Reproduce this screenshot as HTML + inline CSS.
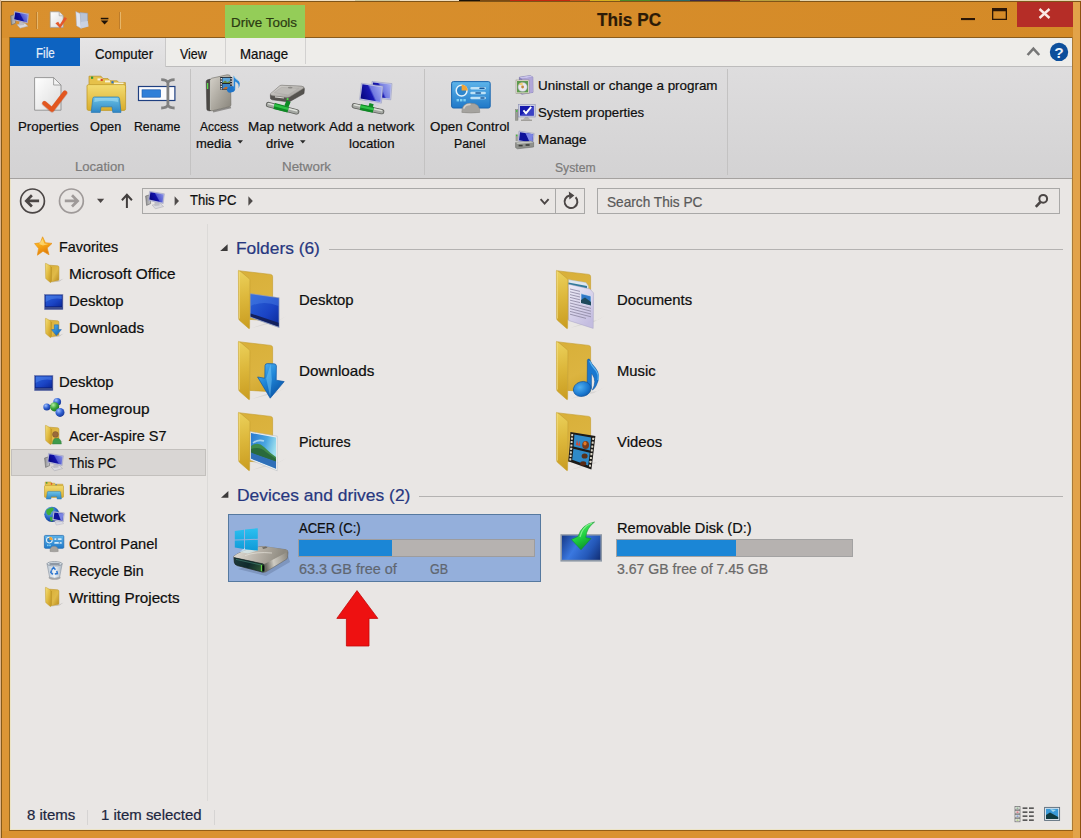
<!DOCTYPE html>
<html lang="en">
<head>
<meta charset="utf-8">
<title>This PC</title>
<style>
html,body{margin:0;padding:0}
body{width:1081px;height:838px;position:relative;overflow:hidden;background:#f3e3c3;font-family:"Liberation Sans","DejaVu Sans",sans-serif}
.a{position:absolute}
.t{position:absolute;white-space:nowrap;line-height:1;transform-origin:0 0;display:block;-webkit-text-stroke:0.22px currentColor}
svg{position:absolute;overflow:visible}
#win{left:1px;top:1px;width:1080px;height:837px;background:linear-gradient(90deg,#d9902e,#d48a27)}
#tabrow{left:10px;top:38px;width:1062px;height:28px;background:#eeedea}
#ribbon{left:10px;top:66px;width:1062px;height:113px;background:linear-gradient(#dedddE 0,#d9d8d9 45%,#d3d2d3 100%)}
#content{left:10px;top:179px;width:1062px;height:651px;background:#e9e6e4}
.vsep{position:absolute;width:1px;background:#c3c2c2}
.box{position:absolute;border:1px solid #a9a8a7;box-sizing:border-box}
</style>
</head>
<body>
<div id="win" class="a"></div>
<div id="tabrow" class="a"></div>
<div id="ribbon" class="a"></div>
<div id="content" class="a"></div>
<!-- window frame lines -->
<div class="a" style="left:2px;top:38px;width:8px;height:800px;background:#dc9636"></div>
<div class="a" style="left:1073px;top:2px;width:8px;height:836px;background:#e2a349"></div>
<div class="a" style="left:2px;top:831px;width:1071px;height:7px;background:#da9230"></div>
<div class="a" style="left:0;top:0;width:1081px;height:1px;background:linear-gradient(90deg,#f1dfc1 0,#f1dfc1 32.8%,#cfc79c 32.8%,#cfc79c 37%,#f1dfc1 37%,#f1dfc1 42.5%,#1a1208 42.5%,#1a1208 44.4%,#7a4a12 44.4%,#7a4a12 47.2%,#c4280f 47.2%,#c4280f 52.7%,#c8541a 52.7%,#c8541a 54.6%,#d8b020 54.6%,#d8b020 57.4%,#4a8a2a 57.4%,#4a8a2a 60.1%,#2a6a6a 60.1%,#2a6a6a 63.8%,#3a2a4a 63.8%,#3a2a4a 66.6%,#7a2018 66.6%,#7a2018 68.5%,#b8a040 68.5%,#b8a040 74%,#e6d6b0 74%,#e6d6b0 100%)"></div>
<div class="a" style="left:0;top:0;width:1px;height:838px;background:#dcb48c"></div>
<div class="a" style="left:1px;top:1px;width:1080px;height:1px;background:#7f5418"></div>
<div class="a" style="left:1px;top:1px;width:1px;height:837px;background:#855a1a"></div>
<div class="a" style="left:1080px;top:1px;width:1px;height:837px;background:#8e5210"></div>
<div class="a" style="left:9px;top:37px;width:1064px;height:1px;background:#8a5c1c"></div>
<div class="a" style="left:9px;top:37px;width:1px;height:794px;background:#946820"></div>
<div class="a" style="left:1072px;top:37px;width:1px;height:794px;background:#a87a38"></div>
<div class="a" style="left:9px;top:830px;width:1064px;height:1px;background:#945e18"></div>
<div class="a" style="left:10px;top:179px;width:1px;height:651px;background:#ece4c6"></div>
<div class="a" style="left:1071px;top:179px;width:1px;height:651px;background:#ece4c6"></div>
<div class="a" style="left:10px;top:829px;width:1062px;height:1px;background:#ece4c6"></div>
<!-- title bar -->
<div class="a" style="left:225px;top:5px;width:80px;height:33px;background:#94cd58"></div>
<div class="a" style="left:1017px;top:2px;width:56px;height:25px;background:#b52d27"></div>
<div class="a" style="left:37px;top:12px;width:1px;height:17px;background:#e6b669"></div><div class="a" style="left:36px;top:12px;width:1px;height:17px;background:#bd7c2a"></div>
<div class="a" style="left:120px;top:12px;width:1px;height:17px;background:#e6b669"></div><div class="a" style="left:119px;top:12px;width:1px;height:17px;background:#bd7c2a"></div>
<!-- tabs -->
<div class="a" style="left:10px;top:38px;width:70px;height:28px;background:#0d63c1"></div>
<div class="a" style="left:80px;top:38px;width:86px;height:29px;background:linear-gradient(#e6e5e6,#dedddE);border-right:1px solid #c9c8c8;box-sizing:border-box"></div>
<div class="vsep" style="left:225px;top:38px;height:26px;background:#d2d1d0"></div>
<div class="vsep" style="left:305px;top:38px;height:26px;background:#d2d1d0"></div>
<div class="a" style="left:166px;top:66px;width:906px;height:1px;background:#bdbcbc"></div>
<div class="a" style="left:10px;top:178px;width:1062px;height:1px;background:#a5a2a0"></div>
<!-- ribbon separators -->
<div class="vsep" style="left:190px;top:69px;height:106px"></div>
<div class="vsep" style="left:424px;top:69px;height:106px"></div>
<div class="vsep" style="left:727px;top:69px;height:106px"></div>
<!-- address bar -->
<div class="box" style="left:142px;top:188px;width:443px;height:26px"></div>
<div class="vsep" style="left:555px;top:189px;height:24px;background:#a9a8a7"></div>
<div class="box" style="left:597px;top:188px;width:463px;height:26px"></div>
<!-- sidebar -->
<div class="vsep" style="left:207px;top:224px;height:577px;background:#dcdad8"></div>
<div class="a" style="left:11px;top:449px;width:195px;height:27px;background:#d9d6d4;border:1px solid #c3c0bd;box-sizing:border-box"></div>
<!-- group lines -->
<div class="a" style="left:329px;top:249px;width:734px;height:1px;background:#b4b2b1"></div>
<div class="a" style="left:419px;top:496px;width:644px;height:1px;background:#b4b2b1"></div>
<!-- selection -->
<div class="a" style="left:228px;top:514px;width:313px;height:68px;background:#94afdb;border:1px solid #56799f;box-sizing:border-box"></div>
<!-- capacity bars -->
<div class="a" style="left:298px;top:539px;width:237px;height:18px;background:#b6b2b0;border:1px solid #9d9c9e;box-sizing:border-box"><div style="width:93px;height:100%;background:#1b86d6"></div></div>
<div class="a" style="left:616px;top:539px;width:237px;height:18px;background:#b6b2b0;border:1px solid #a3a2a2;box-sizing:border-box"><div style="width:119px;height:100%;background:#1b86d6"></div></div>
<!-- status bar separators -->
<div class="vsep" style="left:87px;top:810px;height:15px;background:#d6d4d3"></div>
<div class="vsep" style="left:214px;top:810px;height:15px;background:#d6d4d3"></div>
<svg width="0" height="0" style="left:0;top:0"><defs>
<linearGradient id="scr" gradientUnits="userSpaceOnUse" x1="5.5" y1="10.5" x2="19" y2="3"><stop offset="0" stop-color="#05057c"/><stop offset=".48" stop-color="#1212aa"/><stop offset=".55" stop-color="#4f57cf"/><stop offset="1" stop-color="#8d95e8"/></linearGradient>
<linearGradient id="twr" x1="0" y1="0" x2="1" y2="0"><stop offset="0" stop-color="#8e8e8e"/><stop offset="1" stop-color="#c9c9cc"/></linearGradient>
<linearGradient id="fFront" x1="0" y1="0" x2="1" y2="1"><stop offset="0" stop-color="#f0d36d"/><stop offset=".5" stop-color="#e3bd48"/><stop offset="1" stop-color="#c89c22"/></linearGradient>
<linearGradient id="fBack" x1="0" y1="0" x2="0" y2="1"><stop offset="0" stop-color="#e6c253"/><stop offset="1" stop-color="#d3a930"/></linearGradient>
<linearGradient id="dsk" x1="0" y1="0" x2="1" y2="1"><stop offset="0" stop-color="#2a63d8"/><stop offset=".6" stop-color="#1a43c4"/><stop offset="1" stop-color="#0c2a9a"/></linearGradient>
<linearGradient id="blueArr" x1="0" y1="0" x2="1" y2="1"><stop offset="0" stop-color="#4db1ee"/><stop offset="1" stop-color="#0d5fb5"/></linearGradient>
<linearGradient id="paper" x1="0" y1="0" x2="1" y2="1"><stop offset="0" stop-color="#ffffff"/><stop offset="1" stop-color="#dcdcdc"/></linearGradient>
<linearGradient id="metal" x1="0" y1="0" x2="0" y2="1"><stop offset="0" stop-color="#c8c8c6"/><stop offset=".5" stop-color="#8d8d8a"/><stop offset="1" stop-color="#4a4a48"/></linearGradient>
<linearGradient id="grn" x1="0" y1="0" x2="0" y2="1"><stop offset="0" stop-color="#5fe06a"/><stop offset="1" stop-color="#129a2a"/></linearGradient>
<linearGradient id="sky" x1="0" y1="0" x2="0" y2="1"><stop offset="0" stop-color="#3f8fd6"/><stop offset=".55" stop-color="#a9d6ee"/><stop offset=".6" stop-color="#4f8f6a"/><stop offset="1" stop-color="#1f4f5a"/></linearGradient>
<linearGradient id="cp" x1="0" y1="0" x2="0" y2="1"><stop offset="0" stop-color="#5db4ea"/><stop offset="1" stop-color="#1f78c8"/></linearGradient>
</defs></svg>
<svg style="left:10px;top:10.5px" width="19.4" height="17.46" viewBox="0 0 20 18"><path d="M0.6 5 L5 3.8 L5.6 12.6 L1.6 14.4Z" fill="url(#twr)" stroke="#66666a" stroke-width=".6"/>
<path d="M7.2 14 L15.4 12.6 L18.6 15.6 L10.4 17.8Z" fill="#d9d9de" stroke="#a6a6ae" stroke-width=".5"/>
<path d="M9.6 11 L14 11.6 L14.6 14.4 L9.4 15Z" fill="#bdbdc6"/>
<path d="M4.6 0.3 L19.4 2.8 L18.2 12.6 L3.4 9.4Z" fill="#b9bcdc" stroke="#8e91b6" stroke-width=".4"/>
<path d="M5.4 1.3 L18.5 3.5 L17.5 11.5 L4.3 8.6Z" fill="url(#scr)"/></svg>
<svg style="left:145px;top:191px" width="20.0" height="18.0" viewBox="0 0 20 18"><path d="M0.6 5 L5 3.8 L5.6 12.6 L1.6 14.4Z" fill="url(#twr)" stroke="#66666a" stroke-width=".6"/>
<path d="M7.2 14 L15.4 12.6 L18.6 15.6 L10.4 17.8Z" fill="#d9d9de" stroke="#a6a6ae" stroke-width=".5"/>
<path d="M9.6 11 L14 11.6 L14.6 14.4 L9.4 15Z" fill="#bdbdc6"/>
<path d="M4.6 0.3 L19.4 2.8 L18.2 12.6 L3.4 9.4Z" fill="#b9bcdc" stroke="#8e91b6" stroke-width=".4"/>
<path d="M5.4 1.3 L18.5 3.5 L17.5 11.5 L4.3 8.6Z" fill="url(#scr)"/></svg>
<svg style="left:44px;top:453px" width="20.0" height="18.0" viewBox="0 0 20 18"><path d="M0.6 5 L5 3.8 L5.6 12.6 L1.6 14.4Z" fill="url(#twr)" stroke="#66666a" stroke-width=".6"/>
<path d="M7.2 14 L15.4 12.6 L18.6 15.6 L10.4 17.8Z" fill="#d9d9de" stroke="#a6a6ae" stroke-width=".5"/>
<path d="M9.6 11 L14 11.6 L14.6 14.4 L9.4 15Z" fill="#bdbdc6"/>
<path d="M4.6 0.3 L19.4 2.8 L18.2 12.6 L3.4 9.4Z" fill="#b9bcdc" stroke="#8e91b6" stroke-width=".4"/>
<path d="M5.4 1.3 L18.5 3.5 L17.5 11.5 L4.3 8.6Z" fill="url(#scr)"/></svg>
<svg style="left:48.5px;top:11px" width="18.0" height="18.0" viewBox="0 0 18 18"><path d="M1.2 0.8 H10.2 L14.2 4.8 V16.4 H1.2Z" fill="url(#paper)" stroke="#9a9a9a" stroke-width=".7"/>
<path d="M10.2 0.8 V4.8 H14.2" fill="#e8e8e8" stroke="#9a9a9a" stroke-width=".6"/>
<path d="M6.4 12.2 L9.2 10.8 L10.9 13.4 L15.6 6 L18 7.4 L11.2 17.2Z" fill="#e5582a"/></svg>
<svg style="left:75px;top:11px" width="15" height="18" viewBox="0 0 15 18"><path d="M5 1.6 L12.6 2.2 L12.8 15.4 L5.4 16.8Z" fill="#b9c4d8" stroke="#8e9bb4" stroke-width=".5"/>
<path d="M0.8 0.6 L5.2 2.6 L6.2 17.6 L1.6 14.8Z" fill="#dfe5f0" stroke="#a4aec4" stroke-width=".5"/>
<path d="M6.2 17.6 L13.6 15.6 L12.8 10 L5.8 11Z" fill="#cbd3e2" opacity=".9"/></svg>
<svg style="left:100px;top:17px" width="10" height="8" viewBox="0 0 10 8"><rect x="0.8" y="0.8" width="7.6" height="1.5" fill="#1d1208"/><path d="M0.8 3.5 H8.4 L4.6 7.5Z" fill="#1d1208"/></svg>
<svg style="left:960px;top:17px" width="16" height="4" viewBox="0 0 16 4"><rect x="1" y="1" width="14" height="2.1" fill="#2a1606"/></svg>
<svg style="left:991px;top:7px" width="17" height="14" viewBox="0 0 17 14"><path d="M1 1 H16 V13 H1Z M2.3 4.2 V11.7 H14.7 V4.2Z" fill="#2a1606" fill-rule="evenodd"/></svg>
<svg style="left:1038px;top:8px" width="13" height="11" viewBox="0 0 13 11"><path d="M1.5 1 L11.5 10 M11.5 1 L1.5 10" stroke="#fbe9e6" stroke-width="2.4" fill="none"/></svg>
<svg style="left:1026px;top:46px" width="15" height="11" viewBox="0 0 15 11"><path d="M1.6 9 L7.4 2.6 L13.2 9" stroke="#767676" stroke-width="2.6" fill="none" stroke-linejoin="miter"/></svg>
<svg style="left:1049px;top:42px" width="20" height="20" viewBox="0 0 20 20"><circle cx="10" cy="9.9" r="9.2" fill="#0d4f9c"/><text x="10" y="15.6" text-anchor="middle" font-family="Liberation Sans, sans-serif" font-weight="bold" font-size="15.5" fill="#e8f2fb">?</text></svg>
<svg style="left:32px;top:75px" width="36" height="40" viewBox="32 75 36 40"><path d="M34.6 77.6 H53.6 L61 85 V110.2 H34.6Z" fill="url(#paper)" stroke="#8f8f8f" stroke-width=".9"/>
<path d="M53.6 77.6 V85 H61Z" fill="#f2f2f2" stroke="#8f8f8f" stroke-width=".8" stroke-linejoin="round"/>
<path d="M44.4 103.6 L52 110 L65 93" fill="none" stroke="#b23c10" stroke-width="5.2" stroke-linecap="round" stroke-linejoin="round" opacity=".35"/>
<path d="M44.4 103.2 L52 109.6 L65 92.6" fill="none" stroke="#e2561f" stroke-width="4.2" stroke-linecap="round" stroke-linejoin="round"/></svg>
<svg style="left:85px;top:73px" width="42" height="42" viewBox="85 73 42 42"><defs><linearGradient id="exf" x1="0" y1="0" x2="0" y2="1"><stop offset="0" stop-color="#f3dc72"/><stop offset="1" stop-color="#d9ad2c"/></linearGradient>
<linearGradient id="exb" x1="0" y1="0" x2="0" y2="1"><stop offset="0" stop-color="#6cc3e6"/><stop offset="1" stop-color="#2f86c4"/></linearGradient></defs>
<path d="M89 76.2 H101 L103 78.6 H108 L110 80.8 H117 L119 82.6 H125.4 V92 H89Z" fill="#e6c14a" stroke="#b8922a" stroke-width=".7"/>
<rect x="97.5" y="78.4" width="5" height="2" fill="#f7f1d6"/><rect x="105" y="80.4" width="5" height="2" fill="#f7f1d6"/><rect x="114" y="82.6" width="9.5" height="2.2" fill="#f7f1d6"/>
<rect x="91" y="76.6" width="2.2" height="2.2" fill="#2f9a3a"/><rect x="100.6" y="78.8" width="2.2" height="2.2" fill="#d8402a"/><rect x="111.4" y="81.2" width="2.2" height="2.2" fill="#2a6fc4"/>
<rect x="87" y="84.6" width="38.6" height="25.8" rx="1.6" fill="url(#exf)" stroke="#c09a2c" stroke-width=".8"/>
<path d="M94.4 97 H117.8 Q119.2 97 119.5 98.4 L121 112.4 H112.8 L112 106.8 H101 L100.2 112.4 H91.2 L92.8 98.4 Q93 97 94.4 97Z" fill="url(#exb)" stroke="#2a78b4" stroke-width=".7"/>
<path d="M94.8 98 H117.6 L118.2 102 Q106 99.6 94.2 102Z" fill="#a9e0f4" opacity=".55"/></svg>
<svg style="left:136px;top:77px" width="42" height="34" viewBox="136 77 42 34"><rect x="138.5" y="86.5" width="36.4" height="14" fill="#fbfbfd" stroke="#1f3f80" stroke-width="1.2"/>
<rect x="142" y="89.8" width="18.6" height="7.4" fill="#2f7fd8" stroke="#1a57a8" stroke-width=".6"/>
<path d="M161.2 79.6 Q166.6 79.6 167.9 82.6 Q169.2 79.6 174.6 79.6 M161.2 108 Q166.6 108 167.9 105 Q169.2 108 174.6 108 M167.9 82 V105.6" fill="none" stroke="#808080" stroke-width="2.8"/></svg>
<svg style="left:203px;top:72px" width="40" height="42" viewBox="203 72 40 42"><defs><linearGradient id="am1" x1="0" y1="0" x2="1" y2="1"><stop offset="0" stop-color="#d6d2ca"/><stop offset=".5" stop-color="#aeaaa1"/><stop offset="1" stop-color="#88847b"/></linearGradient></defs>
<path d="M210 80.4 Q210 78.6 211.8 78.2 L227 74.8 Q230.4 74.2 230.5 77 L230.9 104.8 Q230.9 106.4 229.2 106.8 L212 110.8 Q210.2 111 210.2 109.4Z" fill="url(#am1)" stroke="#6c6962" stroke-width=".6"/>
<path d="M206.2 81.6 Q206.2 80.2 207.6 79.8 L210 79.2 L210.3 110.9 L208 110.6 Q206.8 110.4 206.8 109Z" fill="#4b4845" stroke="#3a3836" stroke-width=".5"/>
<path d="M207.6 83 V89" stroke="#59d84a" stroke-width="1.3"/>
<path d="M210.4 80 V110" stroke="#e9e6df" stroke-width=".9" opacity=".8"/>
<path d="M213 111.6 L231 107.4" stroke="#55524e" stroke-width="1.6" opacity=".55"/>
<rect x="220.2" y="77" width="12" height="12.8" fill="#20242c"/>
<rect x="222.4" y="77.8" width="7.6" height="5.2" fill="#5fa6d8"/><path d="M222.4 83 L225 80.4 L227.4 82.2 L230 80.8 V83Z" fill="#6a8a3c"/>
<rect x="222.4" y="84" width="7.6" height="5.2" fill="#3d86c8"/><path d="M222.4 89.2 L226 86.4 L230 89.2Z" fill="#c06a2a"/>
<g fill="#f4f4f4"><rect x="220.7" y="78" width="1.2" height="1.4"/><rect x="220.7" y="80.6" width="1.2" height="1.4"/><rect x="220.7" y="83.2" width="1.2" height="1.4"/><rect x="220.7" y="85.8" width="1.2" height="1.4"/><rect x="220.7" y="88.2" width="1.2" height="1.2"/>
<rect x="230.5" y="78" width="1.2" height="1.4"/><rect x="230.5" y="80.6" width="1.2" height="1.4"/><rect x="230.5" y="83.2" width="1.2" height="1.4"/><rect x="230.5" y="85.8" width="1.2" height="1.4"/><rect x="230.5" y="88.2" width="1.2" height="1.2"/></g>
<ellipse cx="231" cy="89.4" rx="4.1" ry="3.1" fill="#1f74c8" transform="rotate(-18 231 89.4)"/>
<path d="M233.6 89.6 V75.4 Q234.4 78 237.6 80 Q241.6 83 238.4 88.4 Q239.8 83.8 235.2 81.6 V89.6Z" fill="#2a86d8"/>
<path d="M233.8 76 Q235 78.6 237.8 80.4" stroke="#8fd0f4" stroke-width=".8" fill="none"/></svg>
<svg style="left:264px;top:83px" width="44" height="34" viewBox="264 83 44 34"><defs><linearGradient id="md1" x1="0" y1="0" x2="1" y2="1"><stop offset="0" stop-color="#d8d6d2"/><stop offset="1" stop-color="#9d9a96"/></linearGradient></defs>
<path d="M270.4 94.4 L279.6 86.2 Q280.4 85.4 281.8 85.4 L301.6 86.4 Q304.6 86.6 304.4 89.2 L304 93.6 L289 102 L272.2 99.8 Q270 99.4 270.4 97Z" fill="#55534f" stroke="#3e3c3a" stroke-width=".5"/>
<path d="M270.6 93.4 L279.8 85.8 Q280.6 85.2 281.8 85.2 L301.6 86.2 Q304.2 86.4 303.6 88.2 L289.4 97 Q288.2 97.6 286.8 97.4 L272 95.6 Q270 95 270.6 93.4Z" fill="url(#md1)" stroke="#8a8884" stroke-width=".5"/>
<path d="M274.4 92.6 L281.4 87.4 L298.6 88.4 L288 95 Z" fill="#bdbbb7" stroke="#a4a29e" stroke-width=".4"/>
<ellipse cx="290.2" cy="87.6" rx="2.4" ry=".9" fill="#8c8a86"/>
<path d="M275 96.8 L284 98" stroke="#d6d4d0" stroke-width="1.2"/>
<circle cx="287.6" cy="99" r="1.1" fill="#4fe04a"/>
<path d="M286.4 106.4 L288.6 101.2" stroke="#0e8a24" stroke-width="4.4"/><path d="M268.6 104.6 L296.6 111.8" stroke="#5e605c" stroke-width="5.4" stroke-linecap="round"/>
<path d="M268.6 104.6 L296.6 111.8" stroke="#a4a7a2" stroke-width="3.8000000000000003" stroke-linecap="round"/>
<path d="M268.6 103.6 L296.6 110.8" stroke="#dfe2dc" stroke-width="1.4" stroke-linecap="round"/>
<path d="M274.2 106.0 L288.2 109.6" stroke="#0e8a24" stroke-width="6.0"/>
<path d="M274.2 105.2 L288.2 108.8" stroke="#2fc247" stroke-width="2.4000000000000004"/></svg>
<svg style="left:350px;top:79px" width="44" height="36" viewBox="350 79 44 36"><linearGradient id="mn1" gradientUnits="userSpaceOnUse" x1="372" y1="95" x2="392" y2="86"><stop offset="0" stop-color="#06067e"/><stop offset=".46" stop-color="#1a1ab4"/><stop offset=".54" stop-color="#7078e0"/><stop offset="1" stop-color="#aab2f2"/></linearGradient>
<path d="M372 81.4 L392 83.6 L390.8 99.8 L371 97.60000000000001Z" fill="#c5c8e4" stroke="#8f93bc" stroke-width=".5"/>
<path d="M373 82.4 L391 84.6 L389.8 98.6 L372 96.4Z" fill="url(#mn1)"/><linearGradient id="mn2" gradientUnits="userSpaceOnUse" x1="361" y1="98" x2="383" y2="88"><stop offset="0" stop-color="#06067e"/><stop offset=".46" stop-color="#1a1ab4"/><stop offset=".54" stop-color="#7078e0"/><stop offset="1" stop-color="#aab2f2"/></linearGradient>
<path d="M361.4 83.2 L383 86.2 L381.4 103.2 L359.6 99.60000000000001Z" fill="#c5c8e4" stroke="#8f93bc" stroke-width=".5"/>
<path d="M362.4 84.2 L382 87.2 L380.4 102 L360.6 98.4Z" fill="url(#mn2)"/><path d="M366 101 L378 103 L379 106 L364 104Z" fill="#d2d3df"/><path d="M370 108.6 L371.6 103.6" stroke="#0e8a24" stroke-width="4.4"/><path d="M354.4 105.8 L381.6 111.6" stroke="#5e605c" stroke-width="5.4" stroke-linecap="round"/>
<path d="M354.4 105.8 L381.6 111.6" stroke="#a4a7a2" stroke-width="3.8000000000000003" stroke-linecap="round"/>
<path d="M354.4 104.8 L381.6 110.6" stroke="#dfe2dc" stroke-width="1.4" stroke-linecap="round"/>
<path d="M360.4 107.1 L373.4 109.9" stroke="#0e8a24" stroke-width="6.0"/>
<path d="M360.4 106.3 L373.4 109.1" stroke="#2fc247" stroke-width="2.4000000000000004"/></svg>
<svg style="left:450.6px;top:80.6px" width="40.0" height="32.0" viewBox="0 0 40 32"><rect x=".6" y=".6" width="38.6" height="26.4" rx="1.8" fill="url(#cp)" stroke="#1b66ae" stroke-width="1"/>
<path d="M10.8 31.4 Q10.4 22.2 19.8 22.2 Q29.2 22.2 28.8 31.4 Q19.8 32.6 10.8 31.4Z" fill="#a5a39f" stroke="#85837f" stroke-width=".5"/>
<path d="M13 27 Q14 23.6 19 23.4" stroke="#dcdad6" stroke-width="1.6" fill="none" stroke-linecap="round" opacity=".8"/>
<circle cx="10.6" cy="9.6" r="5.4" fill="#2f86cc" stroke="#e4f2fb" stroke-width="1.5"/>
<path d="M10.6 9.6 V3.4 A6.2 6.2 0 0 1 16.8 9.6Z" fill="#f0a436"/>
<g stroke="#bfe2f6" stroke-width="2.6" stroke-linecap="round"><path d="M20.6 7.2 H33.6 M20.6 12 H33.6 M20.6 17 H33.6"/></g>
<g stroke="#185a9c" stroke-width="1.6" stroke-linecap="round"><path d="M29 7.2 H33 M25 12 H29.4 M30 17 H33"/></g>
<g fill="#7fd0f2"><rect x="5.6" y="18" width="2.4" height="2.4"/><rect x="9" y="18" width="2.4" height="2.4"/><rect x="12.4" y="18" width="2.4" height="2.4"/></g></svg>
<svg style="left:515px;top:75px" width="19" height="20" viewBox="515 75 19 20"><path d="M519.4 77.2 L530 75.6 L532.8 77 L533 92.4 L522 94.2 L519.4 92.6Z" fill="#8e86c4" stroke="#5f5a96" stroke-width=".5"/>
<path d="M519.4 77.2 L530 75.6 L532.8 77 L522.2 78.8Z" fill="#c9c4ea"/>
<path d="M522.2 78.8 L522 94.2" stroke="#5f5a96" stroke-width=".5"/>
<path d="M522.2 78.8 L532.8 77 L533 92.4 L522 94.2Z" fill="#b0a6d8"/>
<rect x="516" y="80" width="13" height="13.4" fill="#e9e4d8" stroke="#8a8578" stroke-width=".5"/>
<rect x="517" y="81" width="11" height="11.4" fill="#5d9a4e"/>
<circle cx="522.6" cy="87" r="4.6" fill="#e8e8ee" stroke="#a4a4b4" stroke-width=".5"/><circle cx="522.6" cy="87" r="1.4" fill="#c6863a"/>
<path d="M518.6 84.8 A4.6 4.6 0 0 1 522.6 82.4 L522.6 85.6Z" fill="#f4c85a" opacity=".8"/></svg>
<svg style="left:514px;top:103px" width="22" height="19" viewBox="514 103 22 19"><rect x="515.4" y="109.6" width="2.6" height="10.6" fill="#9a9c94" stroke="#6f716b" stroke-width=".4"/><rect x="516" y="110.2" width="1.4" height="1.6" fill="#3fc43a"/>
<path d="M522.8 119.8 L526.6 115.6 L530.4 119.8Z" fill="#b4b2ae"/><rect x="521" y="119.6" width="11" height="1.4" fill="#a19f9b"/>
<rect x="518.6" y="104.6" width="16.6" height="12.4" fill="#c9cce2" stroke="#8c90b4" stroke-width=".6"/>
<rect x="520" y="106" width="13.8" height="9.6" fill="#1418ac"/>
<path d="M520 115.6 L533.8 106 V115.6Z" fill="#4a52d0" opacity=".7"/>
<path d="M523.4 110.4 L526 113.2 L531.2 106.8" stroke="#ffffff" stroke-width="1.9" fill="none"/></svg>
<svg style="left:514px;top:129px" width="22" height="21" viewBox="514 129 22 21"><path d="M519 131 L534.2 133.4 L533 143.6 L518 141Z" fill="#c9cce2" stroke="#8c90b4" stroke-width=".5"/>
<path d="M520 132.2 L533.2 134.2 L532.2 142.4 L519 140.2Z" fill="#0e129a"/>
<path d="M525.4 133 L533.2 134.2 L532.2 142.4 L529.6 142Z" fill="#7a84e4"/>
<rect x="515.6" y="134.4" width="2.2" height="6.8" fill="#9a9c94"/><rect x="516" y="134.8" width="1.3" height="1.4" fill="#3fc43a"/>
<path d="M515.6 142.6 L531 141.2 L533.6 142.4 V147 L517.4 148.8 L515.6 147.6Z" fill="#8f918c" stroke="#5c5e5a" stroke-width=".5"/>
<path d="M515.6 142.6 L531 141.2 L533.6 142.4 L517.6 144Z" fill="#c4c6c0"/>
<rect x="518.6" y="144.8" width="4" height="1.6" fill="#3c3e3a"/><rect x="525.6" y="144.2" width="4" height="1.6" fill="#3c3e3a"/></svg>
<svg style="left:0px;top:0px" width="1081" height="838" viewBox="0 0 1081 838"><g><circle cx="32.5" cy="200.9" r="11.9" fill="none" stroke="#4b4645" stroke-width="1.7"/>
<path d="M39.1 200.9 H27.1 M31.9 195.3 L26.3 200.9 L31.9 206.5" fill="none" stroke="#4b4645" stroke-width="2.7" stroke-linejoin="miter"/></g><g transform="translate(142.8 0) scale(-1 1)"><circle cx="71.4" cy="200.9" r="11.9" fill="none" stroke="#9f9a99" stroke-width="1.7"/>
<path d="M78.0 200.9 H66.0 M70.80000000000001 195.3 L65.2 200.9 L70.80000000000001 206.5" fill="none" stroke="#9f9a99" stroke-width="2.7" stroke-linejoin="miter"/></g><path d="M97 198.8 H104.2 L100.6 203Z" fill="#4b4645"/><path d="M126.9 207.9 V195.2 M121.9 200.2 L126.9 194.8 L131.9 200.2" fill="none" stroke="#423e3d" stroke-width="2"/><path d="M174.6 196.2 L179 201 L174.6 205.8Z" fill="#4f4b4a"/><path d="M248.4 196.2 L252.8 201 L248.4 205.8Z" fill="#4f4b4a"/><path d="M540.6 199.2 L544.6 203.6 L548.6 199.2" fill="none" stroke="#4b4645" stroke-width="1.9"/><path d="M575.6 197.2 A6.4 6.4 0 1 1 569.6 195.4" fill="none" stroke="#4b4645" stroke-width="2"/><path d="M568.8 191.6 L574.4 195.4 L569.4 199.6Z" fill="#4b4645"/><circle cx="1043.2" cy="198.8" r="3.9" fill="none" stroke="#4b4645" stroke-width="2"/><path d="M1040.4 202 L1035.8 206.8" stroke="#4b4645" stroke-width="2.6"/><path d="M227.6 244.2 V251 H220.2Z" fill="#3c3a3a"/><path d="M228.4 491 V497.8 H221Z" fill="#3c3a3a"/></svg>
<svg style="left:34px;top:235.5px" width="19" height="20" viewBox="0 0 19 20"><defs><linearGradient id="star" x1="0" y1="0" x2="0.4" y2="1"><stop offset="0" stop-color="#fcd23a"/><stop offset=".55" stop-color="#f6a516"/><stop offset="1" stop-color="#e07c0a"/></linearGradient></defs>
<path d="M8.6 0.8 L11.4 6.8 L18 7.4 L13.2 12 L15 18.8 L9 15.2 L3.4 19.2 L4.6 12.4 L0.6 7.6 L6.4 6.8Z" fill="url(#star)" stroke="#e8941a" stroke-width=".7" stroke-linejoin="round"/>
<path d="M8.6 3 L10.4 7.4 L14.6 8 L9 9.4 L5 8Z" fill="#fff3a8" opacity=".55"/></svg>
<svg style="left:45px;top:263.4px" width="19" height="20" viewBox="0 0 19 20"><defs><linearGradient id="sfF3" x1="0" y1="0" x2="1" y2="1"><stop offset="0" stop-color="#f4e07a"/><stop offset=".5" stop-color="#e2bd44"/><stop offset="1" stop-color="#c4941c"/></linearGradient>
<linearGradient id="sfB3" x1="0" y1="0" x2="1" y2="1"><stop offset="0" stop-color="#d8ae36"/><stop offset=".55" stop-color="#e0ba48"/><stop offset="1" stop-color="#b88a1c"/></linearGradient></defs>
<path d="M6 19.6 L14 17.6 L18.6 15.4 L14.4 18.4Z" fill="#000" opacity=".16"/>
<path d="M4.6 2.2 L12.6 2.8 Q13.9 2.9 13.9 4.2 V16.4 Q13.9 17.4 12.9 17.6 L5.2 19Z" fill="url(#sfB3)" stroke="#b88e22" stroke-width=".5"/>
<path d="M0.4 0.9 Q0.3 0 1 0.4 L5 2.6 Q5.7 3 5.7 3.8 L5.9 18.7 Q5.9 19.9 5.1 19.3 L1.2 16 Q0.7 15.6 0.7 14.8Z" fill="url(#sfF3)" stroke="#c09a2a" stroke-width=".5"/>
<path d="M6.4 4 V18.4" stroke="#a67c14" stroke-width=".7" opacity=".6"/></svg>
<svg style="left:44.4px;top:293.6px" width="19.4" height="16" viewBox="0 0 19.4 16"><rect x=".5" y=".5" width="18.4" height="15" fill="#0c1f78" stroke="#7a86b8" stroke-width=".6"/>
<rect x="1.6" y="1.4" width="16.2" height="11" fill="url(#dsk)"/>
<path d="M1.6 1.4 H17.8 V5 Q9 3.4 1.6 8Z" fill="#5a8ff0" opacity=".45"/>
<rect x="1" y="13" width="17.4" height="2.2" fill="#3a4a8c"/></svg>
<svg style="left:45px;top:318px" width="19" height="20" viewBox="0 0 19 20"><defs><linearGradient id="sfF4" x1="0" y1="0" x2="1" y2="1"><stop offset="0" stop-color="#f4e07a"/><stop offset=".5" stop-color="#e2bd44"/><stop offset="1" stop-color="#c4941c"/></linearGradient>
<linearGradient id="sfB4" x1="0" y1="0" x2="1" y2="1"><stop offset="0" stop-color="#d8ae36"/><stop offset=".55" stop-color="#e0ba48"/><stop offset="1" stop-color="#b88a1c"/></linearGradient></defs>
<path d="M6 19.6 L14 17.6 L18.6 15.4 L14.4 18.4Z" fill="#000" opacity=".16"/>
<path d="M4.6 2.2 L12.6 2.8 Q13.9 2.9 13.9 4.2 V16.4 Q13.9 17.4 12.9 17.6 L5.2 19Z" fill="url(#sfB4)" stroke="#b88e22" stroke-width=".5"/><path d="M9.4 6.8 H13.4 V11.6 H16.4 L11.4 17.6 L6.4 11.6 H9.4Z" fill="url(#blueArr)" stroke="#1a62b4" stroke-width=".5"/>
<path d="M0.4 0.9 Q0.3 0 1 0.4 L5 2.6 Q5.7 3 5.7 3.8 L5.9 18.7 Q5.9 19.9 5.1 19.3 L1.2 16 Q0.7 15.6 0.7 14.8Z" fill="url(#sfF4)" stroke="#c09a2a" stroke-width=".5"/>
<path d="M6.4 4 V18.4" stroke="#a67c14" stroke-width=".7" opacity=".6"/></svg>
<svg style="left:34.3px;top:374.6px" width="19.4" height="16" viewBox="0 0 19.4 16"><rect x=".5" y=".5" width="18.4" height="15" fill="#0c1f78" stroke="#7a86b8" stroke-width=".6"/>
<rect x="1.6" y="1.4" width="16.2" height="11" fill="url(#dsk)"/>
<path d="M1.6 1.4 H17.8 V5 Q9 3.4 1.6 8Z" fill="#5a8ff0" opacity=".45"/>
<rect x="1" y="13" width="17.4" height="2.2" fill="#3a4a8c"/></svg>
<svg style="left:43px;top:398px" width="22" height="20" viewBox="43 398 22 20"><defs><radialGradient id="bb" cx=".35" cy=".3" r=".8"><stop offset="0" stop-color="#9fc0ff"/><stop offset=".5" stop-color="#2f5fd0"/><stop offset="1" stop-color="#12308c"/></radialGradient>
<radialGradient id="gb" cx=".35" cy=".3" r=".8"><stop offset="0" stop-color="#b4f0a0"/><stop offset=".5" stop-color="#3aa63a"/><stop offset="1" stop-color="#176a1e"/></radialGradient></defs>
<path d="M46.6 407 L55 406.6 L57.4 401.6 M55 406.6 L60 412.4" stroke="#9aa2b8" stroke-width="1.4"/>
<circle cx="57.2" cy="401.8" r="3.9" fill="url(#bb)"/><circle cx="46.8" cy="407" r="3.5" fill="url(#bb)"/>
<circle cx="54.6" cy="406.8" r="4.6" fill="url(#gb)"/><circle cx="60" cy="412.4" r="4.5" fill="url(#bb)"/></svg>
<svg style="left:45px;top:425.4px" width="19" height="20" viewBox="0 0 19 20"><defs><linearGradient id="sfF5" x1="0" y1="0" x2="1" y2="1"><stop offset="0" stop-color="#f4e07a"/><stop offset=".5" stop-color="#e2bd44"/><stop offset="1" stop-color="#c4941c"/></linearGradient>
<linearGradient id="sfB5" x1="0" y1="0" x2="1" y2="1"><stop offset="0" stop-color="#d8ae36"/><stop offset=".55" stop-color="#e0ba48"/><stop offset="1" stop-color="#b88a1c"/></linearGradient></defs>
<path d="M6 19.6 L14 17.6 L18.6 15.4 L14.4 18.4Z" fill="#000" opacity=".16"/>
<path d="M4.6 2.2 L12.6 2.8 Q13.9 2.9 13.9 4.2 V16.4 Q13.9 17.4 12.9 17.6 L5.2 19Z" fill="url(#sfB5)" stroke="#b88e22" stroke-width=".5"/><path d="M7.6 19 Q7.6 13.2 11.4 13.2 Q16.4 13.2 16.4 19Z" fill="#3f9a4c" stroke="#2a7a38" stroke-width=".4"/><circle cx="10.4" cy="9.4" r="2.9" fill="#9a6a3a" stroke="#6e4a26" stroke-width=".4"/>
<path d="M0.4 0.9 Q0.3 0 1 0.4 L5 2.6 Q5.7 3 5.7 3.8 L5.9 18.7 Q5.9 19.9 5.1 19.3 L1.2 16 Q0.7 15.6 0.7 14.8Z" fill="url(#sfF5)" stroke="#c09a2a" stroke-width=".5"/>
<path d="M6.4 4 V18.4" stroke="#a67c14" stroke-width=".7" opacity=".6"/></svg>
<svg style="left:44px;top:480.5px" width="20" height="18.5" viewBox="0 0 20 18.5"><path d="M1.2 1 H7 L8 2.2 H10.6 L11.6 3.2 H18.8 V7 H1.2Z" fill="#e6c14a" stroke="#b8922a" stroke-width=".5"/>
<rect x="2" y="1.2" width="1.4" height="1.4" fill="#2f9a3a"/><rect x="6.8" y="2.2" width="1.4" height="1.4" fill="#d8402a"/><rect x="11.4" y="3.3" width="1.4" height="1.4" fill="#2a6fc4"/>
<rect x=".5" y="4.6" width="19" height="11.8" rx=".9" fill="url(#exf)" stroke="#c09a2c" stroke-width=".6"/>
<path d="M4.2 10.4 H15.8 Q16.5 10.4 16.6 11.1 L17.4 18 H13.2 L12.8 15.4 H7.2 L6.8 18 H2.4 L3.4 11.1 Q3.5 10.4 4.2 10.4Z" fill="url(#exb)" stroke="#2a78b4" stroke-width=".5"/></svg>
<svg style="left:43.5px;top:505.5px" width="21" height="20" viewBox="43.5 505.5 21 20"><defs><radialGradient id="glb" cx=".35" cy=".3" r=".8"><stop offset="0" stop-color="#7ab8f0"/><stop offset=".6" stop-color="#1f5fc0"/><stop offset="1" stop-color="#0e2f80"/></radialGradient></defs>
<circle cx="51.4" cy="513.8" r="7.6" fill="url(#glb)"/>
<path d="M46 509.6 Q48.6 506.8 52.2 507 Q54 508.6 52.4 510.4 Q50.6 511 50.6 513 Q49.4 515.6 47.4 514.4 Q45 512.4 46 509.6Z M49.6 516.6 Q52 516 53 518 Q52.4 520.6 50.6 521 Q49 518.8 49.6 516.6Z" fill="#3fae3a"/>
<path d="M53 511 L63.8 512.4 L62.8 521.4 L52 519.4Z" fill="#c9cce2" stroke="#8c90b4" stroke-width=".5"/>
<path d="M53.9 512 L62.8 513.2 L62 520.3 L53 518.6Z" fill="#0e129a"/><path d="M57.6 512.5 L62.8 513.2 L62 520.3 L60.4 520Z" fill="#7a84e4"/>
<path d="M54.6 521.6 L61.6 521 L63 523.2 L55.8 524.6Z" fill="#dedee6" stroke="#a9a9b6" stroke-width=".4"/></svg>
<svg style="left:44px;top:535.4px" width="20.2" height="17" viewBox="0 0 40 33.6"><rect x=".8" y=".8" width="38.4" height="25.6" rx="2" fill="url(#cp)" stroke="#1b66ae" stroke-width="1.4"/>
<path d="M11.8 32.6 Q11.4 22.4 20 22.4 Q28.6 22.4 28.2 32.6 Q20 34 11.8 32.6Z" fill="#a5a39f" stroke="#85837f" stroke-width=".8"/>
<circle cx="10.6" cy="10" r="5.6" fill="#2f86cc" stroke="#e4f2fb" stroke-width="2"/><path d="M10.6 10 V3.4 A6.6 6.6 0 0 1 17.2 10Z" fill="#f0a436"/>
<g stroke="#d4ecfa" stroke-width="3.4" stroke-linecap="round"><path d="M22 8 H33.6 M22 15.6 H33.6"/></g><g stroke="#185a9c" stroke-width="1.8"><path d="M24 8 H28 M29 15.6 H32"/></g>
<g fill="#7fd0f2"><rect x="6" y="19" width="3" height="3"/><rect x="10.4" y="19" width="3" height="3"/></g></svg>
<svg style="left:46px;top:560.6px" width="17" height="19" viewBox="46 560.6 17 19"><defs><linearGradient id="rb" x1="0" y1="0" x2="1" y2="0"><stop offset="0" stop-color="#b9c4cf"/><stop offset=".5" stop-color="#eef3f7"/><stop offset="1" stop-color="#a9b4c0"/></linearGradient></defs>
<ellipse cx="54.6" cy="577.4" rx="6" ry="1.9" fill="#6d6f72" opacity=".55"/>
<path d="M47 563.4 L49.6 576.8 Q54.6 578.8 59.6 576.8 L62.2 563.4Z" fill="url(#rb)" stroke="#8c96a2" stroke-width=".6"/>
<ellipse cx="54.6" cy="563.4" rx="7.6" ry="2.2" fill="#dfe6ec" stroke="#7e8894" stroke-width=".7"/>
<ellipse cx="54.6" cy="563.6" rx="5.8" ry="1.3" fill="#8e98a4"/>
<path d="M51.6 569.4 L53.6 567 L55.4 569.4 M56.8 570.4 L57.4 573.2 L54.8 573.6 M52.8 574 L50.8 572 L51.6 569.8" fill="none" stroke="#2a74d0" stroke-width="1.5"/></svg>
<svg style="left:45px;top:587px" width="19" height="20" viewBox="0 0 19 20"><defs><linearGradient id="sfF6" x1="0" y1="0" x2="1" y2="1"><stop offset="0" stop-color="#f4e07a"/><stop offset=".5" stop-color="#e2bd44"/><stop offset="1" stop-color="#c4941c"/></linearGradient>
<linearGradient id="sfB6" x1="0" y1="0" x2="1" y2="1"><stop offset="0" stop-color="#d8ae36"/><stop offset=".55" stop-color="#e0ba48"/><stop offset="1" stop-color="#b88a1c"/></linearGradient></defs>
<path d="M6 19.6 L14 17.6 L18.6 15.4 L14.4 18.4Z" fill="#000" opacity=".16"/>
<path d="M4.6 2.2 L12.6 2.8 Q13.9 2.9 13.9 4.2 V16.4 Q13.9 17.4 12.9 17.6 L5.2 19Z" fill="url(#sfB6)" stroke="#b88e22" stroke-width=".5"/>
<path d="M0.4 0.9 Q0.3 0 1 0.4 L5 2.6 Q5.7 3 5.7 3.8 L5.9 18.7 Q5.9 19.9 5.1 19.3 L1.2 16 Q0.7 15.6 0.7 14.8Z" fill="url(#sfF6)" stroke="#c09a2a" stroke-width=".5"/>
<path d="M6.4 4 V18.4" stroke="#a67c14" stroke-width=".7" opacity=".6"/></svg>
<svg style="left:238px;top:270.2px" width="52" height="62" viewBox="0 0 52 62"><defs><linearGradient id="bfF7" gradientUnits="userSpaceOnUse" x1="0" y1="2" x2="13" y2="58"><stop offset="0" stop-color="#e9cc55"/><stop offset=".45" stop-color="#dcb53a"/><stop offset="1" stop-color="#c99c20"/></linearGradient>
<linearGradient id="bfB7" gradientUnits="userSpaceOnUse" x1="12" y1="2" x2="34" y2="50"><stop offset="0" stop-color="#d9b03a"/><stop offset=".6" stop-color="#dcb440"/><stop offset="1" stop-color="#d0a62e"/></linearGradient></defs>
<path d="M14 58 L38 52 L50 45 L42 50 L34 51Z" fill="#000" opacity=".07"/>
<path d="M2 0.9 L32.6 4.4 Q34.6 4.7 34.6 6.6 V49.4 Q34.6 50.8 33.2 50.7 L11.6 49.4 L11.6 9.4Z" fill="url(#bfB7)" stroke="#c39a26" stroke-width=".6"/><path d="M12 23.2 L41.4 27.4 V58 L12 47.6Z" fill="#8c98b8"/>
<path d="M12.6 24.2 L40.6 28.2 V56.6 L12.6 46.6Z" fill="url(#dsk)"/>
<path d="M12.6 24.2 L40.6 28.2 V36 Q26 30 12.6 36Z" fill="#5a90ee" opacity=".35"/>
<path d="M12.6 43.4 L40.6 52.8 V56.6 L12.6 46.6Z" fill="#13205c"/><defs><linearGradient id="bfG8" gradientUnits="userSpaceOnUse" x1="0" y1="2" x2="14" y2="58"><stop offset="0" stop-color="#ebd05a"/><stop offset=".45" stop-color="#ddb83c"/><stop offset="1" stop-color="#c99c20"/></linearGradient></defs>
<path d="M0.4 1.2 Q0.3 -0.2 1.5 0.7 L11 8.4 Q11.9 9.2 11.9 10.6 L11.6 57.4 Q11.6 59.4 10.4 58.2 L1.6 50.4 Q0.7 49.6 0.7 48.4Z" fill="url(#bfG8)" stroke="#c8a232" stroke-width=".6"/>
<path d="M1.3 2 L1.5 48.6" stroke="#f6e28c" stroke-width=".8" opacity=".8"/></svg>
<svg style="left:238px;top:341.2px" width="52" height="62" viewBox="0 0 52 62"><defs><linearGradient id="bfF9" gradientUnits="userSpaceOnUse" x1="0" y1="2" x2="13" y2="58"><stop offset="0" stop-color="#e9cc55"/><stop offset=".45" stop-color="#dcb53a"/><stop offset="1" stop-color="#c99c20"/></linearGradient>
<linearGradient id="bfB9" gradientUnits="userSpaceOnUse" x1="12" y1="2" x2="34" y2="50"><stop offset="0" stop-color="#d9b03a"/><stop offset=".6" stop-color="#dcb440"/><stop offset="1" stop-color="#d0a62e"/></linearGradient></defs>
<path d="M14 58 L38 52 L50 45 L42 50 L34 51Z" fill="#000" opacity=".07"/>
<path d="M2 0.9 L32.6 4.4 Q34.6 4.7 34.6 6.6 V49.4 Q34.6 50.8 33.2 50.7 L11.6 49.4 L11.6 9.4Z" fill="url(#bfB9)" stroke="#c39a26" stroke-width=".6"/><defs><linearGradient id="dlA" gradientUnits="userSpaceOnUse" x1="20" y1="24" x2="44" y2="50"><stop offset="0" stop-color="#55b6f0"/><stop offset=".5" stop-color="#1f86d8"/><stop offset="1" stop-color="#0b56a8"/></linearGradient></defs>
<path d="M27 24.6 Q27.2 22.6 29.4 22.6 L36.2 22.8 Q38.4 23 38.4 25 L38.2 39.2 L46.2 40.6 L32.2 57.2 L19.6 36 L26.8 37.2Z" fill="url(#dlA)" stroke="#0f58a6" stroke-width=".7" stroke-linejoin="round"/>
<path d="M32.6 23 L28.2 37.6 L32.2 56 L33.8 38.4Z" fill="#7fd0fa" opacity=".45"/><defs><linearGradient id="bfG10" gradientUnits="userSpaceOnUse" x1="0" y1="2" x2="14" y2="58"><stop offset="0" stop-color="#ebd05a"/><stop offset=".45" stop-color="#ddb83c"/><stop offset="1" stop-color="#c99c20"/></linearGradient></defs>
<path d="M0.4 1.2 Q0.3 -0.2 1.5 0.7 L11 8.4 Q11.9 9.2 11.9 10.6 L11.6 57.4 Q11.6 59.4 10.4 58.2 L1.6 50.4 Q0.7 49.6 0.7 48.4Z" fill="url(#bfG10)" stroke="#c8a232" stroke-width=".6"/>
<path d="M1.3 2 L1.5 48.6" stroke="#f6e28c" stroke-width=".8" opacity=".8"/></svg>
<svg style="left:238px;top:412.2px" width="52" height="62" viewBox="0 0 52 62"><defs><linearGradient id="bfF11" gradientUnits="userSpaceOnUse" x1="0" y1="2" x2="13" y2="58"><stop offset="0" stop-color="#e9cc55"/><stop offset=".45" stop-color="#dcb53a"/><stop offset="1" stop-color="#c99c20"/></linearGradient>
<linearGradient id="bfB11" gradientUnits="userSpaceOnUse" x1="12" y1="2" x2="34" y2="50"><stop offset="0" stop-color="#d9b03a"/><stop offset=".6" stop-color="#dcb440"/><stop offset="1" stop-color="#d0a62e"/></linearGradient></defs>
<path d="M14 58 L38 52 L50 45 L42 50 L34 51Z" fill="#000" opacity=".07"/>
<path d="M2 0.9 L32.6 4.4 Q34.6 4.7 34.6 6.6 V49.4 Q34.6 50.8 33.2 50.7 L11.6 49.4 L11.6 9.4Z" fill="url(#bfB11)" stroke="#c39a26" stroke-width=".6"/><defs><linearGradient id="pcS" x1="0" y1="0" x2="1" y2=".4"><stop offset="0" stop-color="#2a78d0"/><stop offset=".6" stop-color="#4aa6e0"/><stop offset="1" stop-color="#9fe0ee"/></linearGradient></defs>
<path d="M12 19.6 L39.2 24.2 V58.8 L12 47.8Z" fill="#eef0f2" stroke="#b4b8bc" stroke-width=".5"/>
<path d="M13 21 L38 25.4 V56.8 L13 46.6Z" fill="url(#pcS)"/>
<path d="M13 34 Q20 29 26 35 Q32 41 38 45 V50 L13 41Z" fill="#3f8a4a"/>
<path d="M13 37 Q22 34 28 40 L38 47 V50 L13 41Z" fill="#2a6a3c"/>
<path d="M13 40.6 L38 49.6 V56.8 L13 46.6Z" fill="#2f6fb8"/>
<path d="M15 31 Q20 27 26 29" stroke="#d4ecf8" stroke-width="1.6" fill="none" opacity=".7"/><defs><linearGradient id="bfG12" gradientUnits="userSpaceOnUse" x1="0" y1="2" x2="14" y2="58"><stop offset="0" stop-color="#ebd05a"/><stop offset=".45" stop-color="#ddb83c"/><stop offset="1" stop-color="#c99c20"/></linearGradient></defs>
<path d="M0.4 1.2 Q0.3 -0.2 1.5 0.7 L11 8.4 Q11.9 9.2 11.9 10.6 L11.6 57.4 Q11.6 59.4 10.4 58.2 L1.6 50.4 Q0.7 49.6 0.7 48.4Z" fill="url(#bfG12)" stroke="#c8a232" stroke-width=".6"/>
<path d="M1.3 2 L1.5 48.6" stroke="#f6e28c" stroke-width=".8" opacity=".8"/></svg>
<svg style="left:556.3px;top:270.2px" width="52" height="62" viewBox="0 0 52 62"><defs><linearGradient id="bfF13" gradientUnits="userSpaceOnUse" x1="0" y1="2" x2="13" y2="58"><stop offset="0" stop-color="#e9cc55"/><stop offset=".45" stop-color="#dcb53a"/><stop offset="1" stop-color="#c99c20"/></linearGradient>
<linearGradient id="bfB13" gradientUnits="userSpaceOnUse" x1="12" y1="2" x2="34" y2="50"><stop offset="0" stop-color="#d9b03a"/><stop offset=".6" stop-color="#dcb440"/><stop offset="1" stop-color="#d0a62e"/></linearGradient></defs>
<path d="M14 58 L38 52 L50 45 L42 50 L34 51Z" fill="#000" opacity=".07"/>
<path d="M2 0.9 L32.6 4.4 Q34.6 4.7 34.6 6.6 V49.4 Q34.6 50.8 33.2 50.7 L11.6 49.4 L11.6 9.4Z" fill="url(#bfB13)" stroke="#c39a26" stroke-width=".6"/><defs><linearGradient id="dcP" x1="0" y1="0" x2=".6" y2="1"><stop offset="0" stop-color="#f0eef8"/><stop offset="1" stop-color="#c4bde0"/></linearGradient></defs>
<path d="M12.4 9.6 L30 12.6 L32.4 16 V22 L12.4 18Z" fill="#dfe7ee" stroke="#aab4c0" stroke-width=".4"/>
<path d="M12.4 12.6 L31 16 V18.4 L12.4 15Z" fill="#2f7a9a"/>
<path d="M12.4 14.2 L34 19 L37.6 23 L37.2 58.4 L12.4 50.4Z" fill="url(#dcP)" stroke="#a9a4c4" stroke-width=".5"/>
<g stroke="#8f8aa4" stroke-width="1" opacity=".85"><path d="M14 19 L24 21.4 M14 21.8 L24 24.2 M14 24.6 L24 27 M14 27.4 L24 29.8 M14 30.2 L24 32.6 M14 33 L35 38.4 M14 35.8 L35 41.2 M14 38.6 L35 44 M14 41.4 L35 46.8 M14 44.2 L30 48.4"/></g>
<path d="M25 23.6 L35 26 V35.4 L25 33Z" fill="#2f78c8" stroke="#e9eef6" stroke-width=".6"/><path d="M25 30 L29 27.6 L35 32 V35.4 L25 33Z" fill="#1f4a5c"/><defs><linearGradient id="bfG14" gradientUnits="userSpaceOnUse" x1="0" y1="2" x2="14" y2="58"><stop offset="0" stop-color="#ebd05a"/><stop offset=".45" stop-color="#ddb83c"/><stop offset="1" stop-color="#c99c20"/></linearGradient></defs>
<path d="M0.4 1.2 Q0.3 -0.2 1.5 0.7 L11 8.4 Q11.9 9.2 11.9 10.6 L11.6 57.4 Q11.6 59.4 10.4 58.2 L1.6 50.4 Q0.7 49.6 0.7 48.4Z" fill="url(#bfG14)" stroke="#c8a232" stroke-width=".6"/>
<path d="M1.3 2 L1.5 48.6" stroke="#f6e28c" stroke-width=".8" opacity=".8"/></svg>
<svg style="left:556.3px;top:341.2px" width="52" height="62" viewBox="0 0 52 62"><defs><linearGradient id="bfF15" gradientUnits="userSpaceOnUse" x1="0" y1="2" x2="13" y2="58"><stop offset="0" stop-color="#e9cc55"/><stop offset=".45" stop-color="#dcb53a"/><stop offset="1" stop-color="#c99c20"/></linearGradient>
<linearGradient id="bfB15" gradientUnits="userSpaceOnUse" x1="12" y1="2" x2="34" y2="50"><stop offset="0" stop-color="#d9b03a"/><stop offset=".6" stop-color="#dcb440"/><stop offset="1" stop-color="#d0a62e"/></linearGradient></defs>
<path d="M14 58 L38 52 L50 45 L42 50 L34 51Z" fill="#000" opacity=".07"/>
<path d="M2 0.9 L32.6 4.4 Q34.6 4.7 34.6 6.6 V49.4 Q34.6 50.8 33.2 50.7 L11.6 49.4 L11.6 9.4Z" fill="url(#bfB15)" stroke="#c39a26" stroke-width=".6"/><defs><radialGradient id="muH" cx=".4" cy=".35" r=".8"><stop offset="0" stop-color="#4fb0f0"/><stop offset=".6" stop-color="#1a78d0"/><stop offset="1" stop-color="#0b4f9c"/></radialGradient></defs>
<path d="M31.4 19.4 Q31.6 17.6 33.4 18.2 Q35.2 22.6 39.4 27 Q45.4 34 40.2 44.6 Q38.6 48 36.4 49 Q41 40 36.6 33.8 Q35.8 32.8 35.4 32.6 V47.6 Q31 47.6 31.2 44Z" fill="#1a78d0" stroke="#0b4f9c" stroke-width=".6"/>
<path d="M33.6 20 Q35.6 25 39.6 29 Q43 33.4 42 39" fill="none" stroke="#6cc4f6" stroke-width="1.2" opacity=".8"/>
<ellipse cx="26.2" cy="48" rx="9" ry="7.4" transform="rotate(-16 26.2 48)" fill="url(#muH)" stroke="#0b4f9c" stroke-width=".6"/><defs><linearGradient id="bfG16" gradientUnits="userSpaceOnUse" x1="0" y1="2" x2="14" y2="58"><stop offset="0" stop-color="#ebd05a"/><stop offset=".45" stop-color="#ddb83c"/><stop offset="1" stop-color="#c99c20"/></linearGradient></defs>
<path d="M0.4 1.2 Q0.3 -0.2 1.5 0.7 L11 8.4 Q11.9 9.2 11.9 10.6 L11.6 57.4 Q11.6 59.4 10.4 58.2 L1.6 50.4 Q0.7 49.6 0.7 48.4Z" fill="url(#bfG16)" stroke="#c8a232" stroke-width=".6"/>
<path d="M1.3 2 L1.5 48.6" stroke="#f6e28c" stroke-width=".8" opacity=".8"/></svg>
<svg style="left:556.3px;top:412.2px" width="52" height="62" viewBox="0 0 52 62"><defs><linearGradient id="bfF17" gradientUnits="userSpaceOnUse" x1="0" y1="2" x2="13" y2="58"><stop offset="0" stop-color="#e9cc55"/><stop offset=".45" stop-color="#dcb53a"/><stop offset="1" stop-color="#c99c20"/></linearGradient>
<linearGradient id="bfB17" gradientUnits="userSpaceOnUse" x1="12" y1="2" x2="34" y2="50"><stop offset="0" stop-color="#d9b03a"/><stop offset=".6" stop-color="#dcb440"/><stop offset="1" stop-color="#d0a62e"/></linearGradient></defs>
<path d="M14 58 L38 52 L50 45 L42 50 L34 51Z" fill="#000" opacity=".07"/>
<path d="M2 0.9 L32.6 4.4 Q34.6 4.7 34.6 6.6 V49.4 Q34.6 50.8 33.2 50.7 L11.6 49.4 L11.6 9.4Z" fill="url(#bfB17)" stroke="#c39a26" stroke-width=".6"/><path d="M14.4 20 L39.4 24 Q37.6 40 35.4 57.6 L12.2 49.2 Q14 34 14.4 20Z" fill="#1c1a18"/>
<path d="M18.4 22.6 L35 25.4 L34 38.4 L17.6 34.6Z" fill="#2f8ac8"/><path d="M17.4 36.8 L33.8 40.8 L32.2 53.6 L16.2 47.8Z" fill="#2f8ac8"/>
<path d="M20 33 L21 27.4 L22.4 33.6 L23.2 28.4 L24.4 34Z" fill="#d8482a"/><ellipse cx="29.6" cy="33" rx="3.4" ry="4" fill="#7a3a1a"/><ellipse cx="29" cy="31.6" rx="1.6" ry="2" fill="#e07a2a"/>
<ellipse cx="28.6" cy="44" rx="3" ry="2.6" fill="#5a3018"/><ellipse cx="27.2" cy="51.4" rx="3" ry="2.2" fill="#5a2a14"/><rect x="15.2" y="22.0" width="2" height="2.2" rx=".4" fill="#d9d4c4"/><rect x="14.9" y="25.5" width="2" height="2.2" rx=".4" fill="#d9d4c4"/><rect x="14.6" y="28.9" width="2" height="2.2" rx=".4" fill="#d9d4c4"/><rect x="14.4" y="32.4" width="2" height="2.2" rx=".4" fill="#d9d4c4"/><rect x="14.1" y="35.8" width="2" height="2.2" rx=".4" fill="#d9d4c4"/><rect x="13.9" y="39.3" width="2" height="2.2" rx=".4" fill="#d9d4c4"/><rect x="13.6" y="42.7" width="2" height="2.2" rx=".4" fill="#d9d4c4"/><rect x="13.3" y="46.2" width="2" height="2.2" rx=".4" fill="#d9d4c4"/><rect x="36.2" y="25.8" width="2" height="2.2" rx=".4" fill="#d9d4c4"/><rect x="35.7" y="29.6" width="2" height="2.2" rx=".4" fill="#d9d4c4"/><rect x="35.3" y="33.5" width="2" height="2.2" rx=".4" fill="#d9d4c4"/><rect x="34.8" y="37.3" width="2" height="2.2" rx=".4" fill="#d9d4c4"/><rect x="34.4" y="41.1" width="2" height="2.2" rx=".4" fill="#d9d4c4"/><rect x="33.9" y="44.9" width="2" height="2.2" rx=".4" fill="#d9d4c4"/><rect x="33.5" y="48.8" width="2" height="2.2" rx=".4" fill="#d9d4c4"/><rect x="33.0" y="52.6" width="2" height="2.2" rx=".4" fill="#d9d4c4"/><defs><linearGradient id="bfG18" gradientUnits="userSpaceOnUse" x1="0" y1="2" x2="14" y2="58"><stop offset="0" stop-color="#ebd05a"/><stop offset=".45" stop-color="#ddb83c"/><stop offset="1" stop-color="#c99c20"/></linearGradient></defs>
<path d="M0.4 1.2 Q0.3 -0.2 1.5 0.7 L11 8.4 Q11.9 9.2 11.9 10.6 L11.6 57.4 Q11.6 59.4 10.4 58.2 L1.6 50.4 Q0.7 49.6 0.7 48.4Z" fill="url(#bfG18)" stroke="#c8a232" stroke-width=".6"/>
<path d="M1.3 2 L1.5 48.6" stroke="#f6e28c" stroke-width=".8" opacity=".8"/></svg>
<svg style="left:230px;top:524px" width="62" height="52" viewBox="230 524 62 52"><defs>
<linearGradient id="hdT" gradientUnits="userSpaceOnUse" x1="240" y1="548" x2="280" y2="562"><stop offset="0" stop-color="#d8d4cc"/><stop offset=".5" stop-color="#b4aea4"/><stop offset="1" stop-color="#8e8a80"/></linearGradient>
<linearGradient id="hdS" gradientUnits="userSpaceOnUse" x1="265" y1="560" x2="288" y2="556"><stop offset="0" stop-color="#6c6a62"/><stop offset=".35" stop-color="#cfcbc2"/><stop offset="1" stop-color="#8c887e"/></linearGradient>
<linearGradient id="hdF" gradientUnits="userSpaceOnUse" x1="236" y1="556" x2="262" y2="572"><stop offset="0" stop-color="#1e3a3a"/><stop offset=".5" stop-color="#0f2a2c"/><stop offset="1" stop-color="#2f5a34"/></linearGradient>
<linearGradient id="wn" x1="0" y1="0" x2="0" y2="1"><stop offset="0" stop-color="#2cc0f0"/><stop offset="1" stop-color="#0f9ad8"/></linearGradient></defs>
<path d="M238 569 L266 576 L290 562 L288 556Z" fill="#3a4a6a" opacity=".25"/>
<path d="M233.6 556.4 Q240 551 259.6 546.8 Q262 546.2 264 546.6 L285.4 549.6 Q288.4 550.2 288 552.6 L287.6 557.4 Q287.4 558.8 286 559.6 L266.4 571.6 Q264.8 572.6 263 572.2 L237.4 565.6 Q234.6 564.8 234.2 562Z" fill="url(#hdS)" stroke="#5e5c56" stroke-width=".5"/>
<path d="M233.6 556.4 Q240 551 259.6 546.8 Q262 546.2 264 546.6 L285.4 549.6 Q288.4 550.2 287.4 552 L266 563.2 Q264.4 564 262.6 563.6 L235.4 557.8 Q233.4 557.2 233.6 556.4Z" fill="url(#hdT)"/>
<path d="M262 547.4 L266 546.4 L267.6 547.8 L263.4 549Z" fill="#6e6a62"/>
<path d="M245 555.6 Q256 551.4 272 553" stroke="#e6e2da" stroke-width="1" fill="none" opacity=".7"/>
<path d="M234.2 557.6 L262.6 563.8 Q264.4 564.4 264.4 566.4 V570.4 Q264.4 572.4 262.4 572 L237.4 565.6 Q234.8 564.8 234.4 562.4Z" fill="url(#hdF)" stroke="#0c1c1c" stroke-width=".5"/>
<path d="M236 559.4 L261 565" stroke="#3f7a6c" stroke-width="1" opacity=".7"/>
<path d="M261.4 565 V571.2" stroke="#6ad84a" stroke-width="1.1"/>
<rect x="262.4" y="565.4" width="1.6" height="5.6" fill="#050807"/>
<path d="M244 548 L258 550.2 L248 553.6 L240 552Z" fill="#d8f4fa" opacity=".6"/>
<path d="M234.8 531 L244 529.8 V539.2 L234.8 539.6Z M245 529.6 L257.8 528.2 V538.8 L245 539.2Z M234.8 540.6 L244 540.2 V549 L234.8 547.6Z M245 540.2 L257.8 539.8 V550.6 L245 549.2Z" fill="url(#wn)"/></svg>
<svg style="left:558px;top:520px" width="48" height="44" viewBox="558 520 48 44"><defs><linearGradient id="rdB" gradientUnits="userSpaceOnUse" x1="562" y1="536" x2="600" y2="560"><stop offset="0" stop-color="#173a8a"/><stop offset=".38" stop-color="#3a78e0"/><stop offset=".7" stop-color="#2458b8"/><stop offset="1" stop-color="#122e74"/></linearGradient>
<linearGradient id="rdG" gradientUnits="userSpaceOnUse" x1="574" y1="524" x2="588" y2="550"><stop offset="0" stop-color="#5cf06a"/><stop offset=".5" stop-color="#1fd040"/><stop offset="1" stop-color="#0a8a24"/></linearGradient></defs>
<rect x="560.4" y="534.2" width="41.6" height="27.4" fill="#8e98a6"/>
<rect x="562" y="535.6" width="38.4" height="24.2" fill="url(#rdB)"/>
<path d="M594.6 522 Q582 524 578 536.4 L571.4 539.6 L581 549.8 L591 538.6 L585.8 537.6 Q586.4 528 594.6 522Z" fill="url(#rdG)" stroke="#0c8a28" stroke-width=".5"/>
<path d="M592 523 Q582.4 526.4 580 537" stroke="#a4f8a8" stroke-width="1.2" fill="none" opacity=".7"/></svg>
<svg style="left:335px;top:588px" width="46" height="60" viewBox="335 588 46 60"><path d="M357 590.6 L377.8 618.4 H369 V646 H346.4 V618.4 H336.8Z" fill="#ee1111" stroke="#c40808" stroke-width=".8"/></svg>
<svg style="left:1012px;top:804px" width="50" height="20" viewBox="1012 804 50 20"><g fill="#f4f4f4" stroke="#6a6a6a" stroke-width=".7"><rect x="1015" y="806.4" width="5" height="3.4"/><rect x="1015" y="810.4" width="5" height="3.4"/><rect x="1015" y="814.4" width="5" height="3.4"/><rect x="1015" y="818.4" width="5" height="3.4"/></g>
<path d="M1016.4 808.1 H1018.6" stroke="#5a8a5a" stroke-width="1"/><path d="M1016.4 812.1 H1018.6" stroke="#c83a4a" stroke-width="1"/><path d="M1016.4 816.1 H1018.6" stroke="#4a6ab0" stroke-width="1"/><path d="M1016.4 820.1 H1018.6" stroke="#8ab04a" stroke-width="1"/>
<g stroke="#2a2a2a" stroke-width="1.2"><path d="M1022.6 808.2 H1027.4 M1029 808.2 H1033.8 M1022.6 812.2 H1027.4 M1029 812.2 H1033.8 M1022.6 816.2 H1027.4 M1029 816.2 H1033.8 M1022.6 820.2 H1027.4 M1029 820.2 H1033.8"/></g>
<rect x="1044.6" y="807.4" width="15" height="13" fill="#dfe6ee" stroke="#5a6a7a" stroke-width=".9"/>
<rect x="1046" y="808.8" width="12.2" height="10.2" fill="#3a9ad8"/><path d="M1046 815 L1050 812.6 L1058.2 817 V819 H1046Z" fill="#0f3a40"/><path d="M1050 809 L1056 810 L1053 812Z" fill="#bfe8f6" opacity=".8"/></svg>
<svg style="left:0px;top:0px" width="1081" height="838" viewBox="0 0 1081 838"><path d="M237.4 140.2 H243 L240.2 143.4Z M300 140.2 H305.6 L302.8 143.4Z" fill="#2a2a2a"/></svg>
<span class="t" style="left:596.6px;top:12.3px;font-size:17.6px;color:#2b1a07;font-weight:bold;transform:scaleX(0.9787)">This PC</span>
<span class="t" style="left:231.4px;top:15.7px;font-size:13.6px;color:#2b3b12;transform:scaleX(0.9857)">Drive Tools</span>
<span class="t" style="left:35.5px;top:45.7px;font-size:14.1px;color:#e4eefa;transform:scaleX(0.8215)">File</span>
<span class="t" style="left:94.5px;top:47.2px;font-size:14.1px;color:#0e0e0e;transform:scaleX(0.9382)">Computer</span>
<span class="t" style="left:179.8px;top:47.2px;font-size:14.1px;color:#0e0e0e;transform:scaleX(0.8834)">View</span>
<span class="t" style="left:240.0px;top:47.2px;font-size:14.1px;color:#0e0e0e;transform:scaleX(0.9436)">Manage</span>
<span class="t" style="left:18.0px;top:119.5px;font-size:13.6px;color:#0e0e0e;transform:scaleX(0.9770)">Properties</span>
<span class="t" style="left:90.0px;top:119.5px;font-size:13.6px;color:#0e0e0e;transform:scaleX(0.9392)">Open</span>
<span class="t" style="left:133.7px;top:119.5px;font-size:13.6px;color:#0e0e0e;transform:scaleX(0.9018)">Rename</span>
<span class="t" style="left:199.5px;top:119.5px;font-size:13.6px;color:#0e0e0e;transform:scaleX(0.8794)">Access</span>
<span class="t" style="left:196.2px;top:136.5px;font-size:13.6px;color:#0e0e0e;transform:scaleX(0.9544)">media</span>
<span class="t" style="left:247.5px;top:119.5px;font-size:13.6px;color:#0e0e0e;transform:scaleX(0.9899)">Map network</span>
<span class="t" style="left:266.2px;top:136.5px;font-size:13.6px;color:#0e0e0e;transform:scaleX(0.9517)">drive</span>
<span class="t" style="left:329.0px;top:119.5px;font-size:13.6px;color:#0e0e0e;transform:scaleX(0.9843)">Add a network</span>
<span class="t" style="left:349.0px;top:136.5px;font-size:13.6px;color:#0e0e0e;transform:scaleX(0.9719)">location</span>
<span class="t" style="left:430.0px;top:119.5px;font-size:13.6px;color:#0e0e0e;transform:scaleX(0.9837)">Open Control</span>
<span class="t" style="left:454.0px;top:136.5px;font-size:13.6px;color:#0e0e0e;transform:scaleX(0.9069)">Panel</span>
<span class="t" style="left:538.0px;top:79.0px;font-size:13.6px;color:#0e0e0e;transform:scaleX(0.9859)">Uninstall or change a program</span>
<span class="t" style="left:538.0px;top:105.5px;font-size:13.6px;color:#0e0e0e;transform:scaleX(0.9680)">System properties</span>
<span class="t" style="left:538.0px;top:132.5px;font-size:13.6px;color:#0e0e0e;transform:scaleX(0.9882)">Manage</span>
<span class="t" style="left:75.0px;top:160.2px;font-size:13.6px;color:#7c7b7b;transform:scaleX(0.9638)">Location</span>
<span class="t" style="left:282.0px;top:160.2px;font-size:13.6px;color:#7c7b7b;transform:scaleX(0.9836)">Network</span>
<span class="t" style="left:554.7px;top:160.5px;font-size:13.6px;color:#7c7b7b;transform:scaleX(0.8945)">System</span>
<span class="t" style="left:190.4px;top:193.4px;font-size:14.8px;color:#0e0e0e;transform:scaleX(0.8816)">This PC</span>
<span class="t" style="left:606.6px;top:194.6px;font-size:14.8px;color:#5a5959;transform:scaleX(0.9229)">Search This PC</span>
<span class="t" style="left:59.0px;top:239.5px;font-size:14.8px;color:#0e0e0e;transform:scaleX(0.9710)">Favorites</span>
<span class="t" style="left:69.0px;top:266.5px;font-size:14.8px;color:#0e0e0e;transform:scaleX(1.0398)">Microsoft Office</span>
<span class="t" style="left:69.0px;top:293.5px;font-size:14.8px;color:#0e0e0e;transform:scaleX(1.0054)">Desktop</span>
<span class="t" style="left:69.0px;top:320.5px;font-size:14.8px;color:#0e0e0e;transform:scaleX(1.0256)">Downloads</span>
<span class="t" style="left:59.0px;top:374.5px;font-size:14.8px;color:#0e0e0e;transform:scaleX(1.0054)">Desktop</span>
<span class="t" style="left:69.0px;top:401.5px;font-size:14.8px;color:#0e0e0e;transform:scaleX(1.0422)">Homegroup</span>
<span class="t" style="left:69.0px;top:428.5px;font-size:14.8px;color:#0e0e0e;transform:scaleX(0.9807)">Acer-Aspire S7</span>
<span class="t" style="left:69.0px;top:455.5px;font-size:14.8px;color:#0e0e0e;transform:scaleX(0.8949)">This PC</span>
<span class="t" style="left:69.0px;top:482.5px;font-size:14.8px;color:#0e0e0e;transform:scaleX(0.9796)">Libraries</span>
<span class="t" style="left:69.0px;top:509.5px;font-size:14.8px;color:#0e0e0e;transform:scaleX(1.0426)">Network</span>
<span class="t" style="left:69.0px;top:536.5px;font-size:14.8px;color:#0e0e0e;transform:scaleX(0.9881)">Control Panel</span>
<span class="t" style="left:69.0px;top:563.5px;font-size:14.8px;color:#0e0e0e;transform:scaleX(0.9548)">Recycle Bin</span>
<span class="t" style="left:69.0px;top:590.5px;font-size:14.8px;color:#0e0e0e;transform:scaleX(1.0292)">Writting Projects</span>
<span class="t" style="left:236.4px;top:240.0px;font-size:17.4px;color:#27377f;transform:scaleX(0.9978)">Folders (6)</span>
<span class="t" style="left:299.0px;top:292.8px;font-size:14.8px;color:#0e0e0e;transform:scaleX(1.0054)">Desktop</span>
<span class="t" style="left:299.0px;top:363.8px;font-size:14.8px;color:#0e0e0e;transform:scaleX(1.0283)">Downloads</span>
<span class="t" style="left:299.0px;top:434.8px;font-size:14.8px;color:#0e0e0e;transform:scaleX(0.9652)">Pictures</span>
<span class="t" style="left:617.0px;top:292.8px;font-size:14.8px;color:#0e0e0e;transform:scaleX(1.0033)">Documents</span>
<span class="t" style="left:617.0px;top:363.8px;font-size:14.8px;color:#0e0e0e;transform:scaleX(0.9987)">Music</span>
<span class="t" style="left:617.0px;top:434.8px;font-size:14.8px;color:#0e0e0e;transform:scaleX(1.0024)">Videos</span>
<span class="t" style="left:236.5px;top:486.9px;font-size:17.4px;color:#27377f;transform:scaleX(1.0022)">Devices and drives (2)</span>
<span class="t" style="left:299.3px;top:521.1px;font-size:14.8px;color:#0e0e0e;transform:scaleX(0.8815)">ACER (C:)</span>
<span class="t" style="left:299.3px;top:561.5px;font-size:14.8px;color:#5f6670;transform:scaleX(0.9744)">63.3 GB free of</span>
<span class="t" style="left:429.5px;top:561.5px;font-size:14.8px;color:#5f6670;transform:scaleX(0.8458)">GB</span>
<span class="t" style="left:617.4px;top:521.0px;font-size:14.8px;color:#0e0e0e;transform:scaleX(0.9860)">Removable Disk (D:)</span>
<span class="t" style="left:617.4px;top:561.9px;font-size:14.8px;color:#6a6968;transform:scaleX(0.9524)">3.67 GB free of 7.45 GB</span>
<span class="t" style="left:27.3px;top:808.3px;font-size:14.8px;color:#1d2740;transform:scaleX(1.0123)">8 items</span>
<span class="t" style="left:100.5px;top:808.3px;font-size:14.8px;color:#1d2740;transform:scaleX(1.0107)">1 item selected</span>
</body>
</html>
